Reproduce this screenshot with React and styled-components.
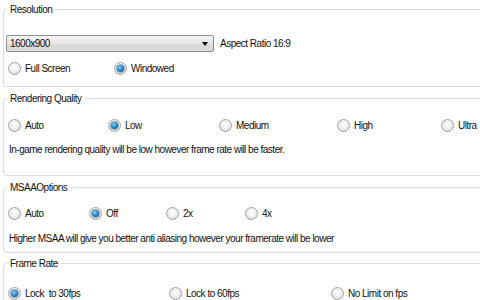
import React from "react";
import styled, { createGlobalStyle } from "styled-components";

const GlobalStyle = createGlobalStyle`
  html, body {
    margin: 0;
    padding: 0;
    background: #ffffff;
    overflow: hidden;
  }
  body {
    font-family: "Liberation Sans", Arial, sans-serif;
    font-size: 10px;
    letter-spacing: -0.5px;
    color: #111;
  }
`;

const Page = styled.div`
  width: 480px;
  height: 300px;
  overflow: hidden;
  padding-left: 3px;
  box-sizing: border-box;
`;

const Group = styled.fieldset`
  position: relative;
  width: 520px;
  height: ${(p) => p.h}px;
  margin: ${(p) => p.top}px 0 0 0;
  padding: 0 0 0 4px;
  border: 1px solid #d5dfe5;
  border-radius: 3px;
  box-sizing: border-box;
  display: flex;
  flex-direction: column;
`;

const Legend = styled.span`
  position: absolute;
  top: -7px;
  left: 3px;
  padding: 0 3px;
  background: #fff;
  line-height: 13px;
  white-space: nowrap;
`;

const Row = styled.div`
  display: flex;
  align-items: center;
  height: 13px;
  margin-top: ${(p) => p.mt}px;
`;

const Option = styled.label`
  display: flex;
  align-items: center;
  width: ${(p) => (p.w ? `${p.w}px` : "auto")};
  flex: none;
  white-space: pre;
  line-height: 13px;
`;

const Dot = styled.span`
  width: 13px;
  height: 13px;
  border-radius: 50%;
  box-sizing: border-box;
  border: 1px solid #a4a4a4;
  background: radial-gradient(circle at 50% 40%, #ffffff 0%, #f0f0f0 45%, #d2d2d2 100%);
  margin-right: 4px;
  position: relative;
  flex: none;

  &::after {
    content: "";
    display: ${(p) => (p.on ? "block" : "none")};
    position: absolute;
    left: 2px;
    top: 2px;
    width: 7px;
    height: 7px;
    border-radius: 50%;
    background: radial-gradient(circle at 40% 35%, #8fd0f5 0%, #2f8bd0 45%, #124c80 100%);
    box-shadow: 0 0 0 0.5px #1b4f7e;
  }
`;

const Note = styled.div`
  margin-top: ${(p) => p.mt}px;
  padding-left: 1px;
  line-height: 13px;
  white-space: nowrap;
`;

const ComboRow = styled.div`
  display: flex;
  align-items: center;
  margin-top: 25px;
  margin-left: -2px;
`;

const Combo = styled.div`
  width: 208px;
  height: 17px;
  box-sizing: border-box;
  border: 1px solid #8e8e8e;
  border-radius: 2px;
  background: linear-gradient(#f4f4f4, #e6e6e6 50%, #dcdcdc 51%, #d9d9d9);
  display: flex;
  align-items: center;
  justify-content: space-between;
  padding: 0 5px 0 3px;
`;

const Arrow = styled.span`
  width: 0;
  height: 0;
  border-left: 3.5px solid transparent;
  border-right: 3.5px solid transparent;
  border-top: 4px solid #000;
`;

const Side = styled.span`
  margin-left: 6px;
  white-space: nowrap;
`;

function Radio({ label, on, w }) {
  return (
    <Option w={w}>
      <Dot on={on ? 1 : 0} />
      {label}
    </Option>
  );
}

export default function App() {
  return (
    <Page>
      <GlobalStyle />
      <Group top={9} h={78}>
        <Legend>Resolution</Legend>
        <ComboRow>
          <Combo>
            <span>1600x900</span>
            <Arrow />
          </Combo>
          <Side>Aspect Ratio 16:9</Side>
        </ComboRow>
        <Row mt={10}>
          <Radio w={106} label="Full Screen" />
          <Radio on label="Windowed" />
        </Row>
      </Group>

      <Group top={11} h={78}>
        <Legend>Rendering Quality</Legend>
        <Row mt={20}>
          <Radio w={100} label="Auto" />
          <Radio w={111} on label="Low" />
          <Radio w={118} label="Medium" />
          <Radio w={104} label="High" />
          <Radio label="Ultra" />
        </Row>
        <Note mt={11}>In-game rendering quality will be low however frame rate will be faster.</Note>
      </Group>

      <Group top={11} h={66}>
        <Legend>MSAAOptions</Legend>
        <Row mt={19}>
          <Radio w={81} label="Auto" />
          <Radio w={77} on label="Off" />
          <Radio w={79} label="2x" />
          <Radio label="4x" />
        </Row>
        <Note mt={12}>Higher MSAA will give you better anti aliasing however your framerate will be lower</Note>
      </Group>

      <Group top={10} h={60}>
        <Legend>Frame Rate</Legend>
        <Row mt={23}>
          <Radio w={161} on label="Lock  to 30fps" />
          <Radio w={162} label="Lock to 60fps" />
          <Radio label="No Limit on fps" />
        </Row>
      </Group>
    </Page>
  );
}
